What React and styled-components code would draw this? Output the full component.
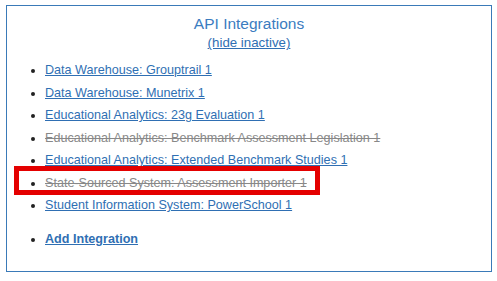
import React from "react";
import styled, { createGlobalStyle } from "styled-components";

const GlobalStyle = createGlobalStyle`
  html, body {
    margin: 0;
    padding: 0;
    background: #fff;
    font-family: "Liberation Sans", Arial, sans-serif;
  }
`;

const Page = styled.div`
  position: relative;
  padding: 5px 0 0 6px;
`;

const Panel = styled.section`
  box-sizing: border-box;
  width: 486px;
  height: 267px;
  border: 1px solid #3a7ab8;
  padding: 9px 0 0 0;
`;

const Header = styled.header`
  text-align: center;
`;

const Title = styled.h2`
  margin: 0;
  font-size: 15.5px;
  font-weight: normal;
  line-height: 18px;
  color: #3b7cbf;
`;

const Toggle = styled.a`
  display: inline-block;
  font-size: 13.3px;
  line-height: 17px;
  color: #2f6fb3;
  text-decoration: underline;
  cursor: pointer;
`;

const List = styled.ul`
  margin: 8px 0 0 0;
  padding-left: 38px;
  font-size: 12.6px;
  line-height: 22.55px;
`;

const Item = styled.li`
  color: #222;
  margin-top: ${(p) => (p.$spaced ? "11.2px" : "0")};
`;

const ItemLink = styled.a`
  color: ${(p) => (p.$inactive ? "#888" : "#2f6fb3")};
  text-decoration: ${(p) => (p.$inactive ? "line-through" : "underline")};
  font-weight: ${(p) => (p.$bold ? "bold" : "normal")};
  cursor: pointer;
`;

const Highlight = styled.div`
  position: absolute;
  left: 14px;
  top: 166px;
  width: 306px;
  height: 29px;
  box-sizing: border-box;
  border: 5px solid #e40000;
  pointer-events: none;
`;

const integrations = [
  { name: "Data Warehouse: Grouptrail 1" },
  { name: "Data Warehouse: Munetrix 1" },
  { name: "Educational Analytics: 23g Evaluation 1" },
  { name: "Educational Analytics: Benchmark Assessment Legislation 1", inactive: true },
  { name: "Educational Analytics: Extended Benchmark Studies 1" },
  { name: "State-Sourced System: Assessment Importer 1", inactive: true },
  { name: "Student Information System: PowerSchool 1" },
];

export default function App() {
  return (
    <>
      <GlobalStyle />
      <Page>
        <Panel>
          <Header>
            <Title>API Integrations</Title>
            <Toggle>(hide inactive)</Toggle>
          </Header>
          <List>
            {integrations.map((item, i) => (
              <Item key={`integration-${i}`}>
                <ItemLink $inactive={item.inactive}>{item.name}</ItemLink>
              </Item>
            ))}
            <Item $spaced>
              <ItemLink $bold>Add Integration</ItemLink>
            </Item>
          </List>
        </Panel>
        <Highlight />
      </Page>
    </>
  );
}
